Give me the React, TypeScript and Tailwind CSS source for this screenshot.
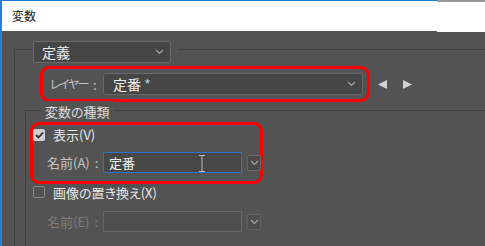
import React from "react";

const font = "font-['Noto_Sans_CJK_JP','Noto_Sans',sans-serif] [font-feature-settings:'palt']";

function Chevron({ className = "" }: { className?: string }) {
  return (
    <svg width="9" height="6" viewBox="0 0 9 6" className={className}>
      <path d="M1 1 L4.5 4.5 L8 1" fill="none" stroke="#a8a8a8" strokeWidth="1.1" />
    </svg>
  );
}

function SmallBtn({ disabled = false }: { disabled?: boolean }) {
  return (
    <div
      className={`w-[14px] h-[16px] flex items-center justify-center rounded-[2px] border ${
        disabled ? "border-[#626262] bg-[#4e4e4e]" : "border-[#676767] bg-[#4a4a4a]"
      }`}
    >
      <Chevron />
    </div>
  );
}

function Checkbox({ checked }: { checked: boolean }) {
  return checked ? (
    <div className="w-[12px] h-[12px] rounded-[2px] bg-[#cfcfcf] flex items-center justify-center">
      <svg width="9" height="8" viewBox="0 0 9 8">
        <path d="M1 4 L3.5 6.5 L8 1.5" fill="none" stroke="#2e2e2e" strokeWidth="1.8" />
      </svg>
    </div>
  ) : (
    <div className="w-[12px] h-[12px] rounded-[2px] border border-[#8a8a8a]" />
  );
}

function Label({ text, width, color, textClass = "" }: { text: string; width: string; color: string; textClass?: string }) {
  return (
    <span className={`${width} ${color} shrink-0 whitespace-nowrap text-[13px] leading-none flex items-center`}>
      <span className={textClass}>{text}</span>
      <span className="ml-[5px]">:</span>
    </span>
  );
}

export default function App() {
  return (
    <div className={`w-[485px] h-[246px] bg-[#535353] border-l-2 border-[#2a7fd6] overflow-hidden flex flex-col ${font}`}>
      {/* title bar */}
      <div className="flex h-[31px] shrink-0">
        <div className="w-[435px] border-t border-[#1e7ad4] bg-white flex items-center pl-[10px] text-[12px] text-[#1a1a1a]">
          変数
        </div>
        <div className="flex-1 border-t-2 border-[#9a9a9a] bg-white h-[32px]" />
      </div>

      {/* body */}
      <div className="flex-1 pl-[12px] pt-[18px] flex flex-col">
        <div className="flex-1 border-l border-t border-[#424242] flex flex-col">
          {/* legend dropdown */}
          <div className="-mt-[9px] ml-[17px] w-fit bg-[#535353] pr-[7px] pl-[1px]">
            <div className="w-[138px] h-[22px] rounded-[3px] border border-[#6b6b6b] bg-[#464646] flex items-center justify-between pl-[8px] pr-[6px]">
              <span className="text-[14px] text-[#f0f0f0] leading-none">定義</span>
              <Chevron />
            </div>
          </div>

          {/* layer row */}
          <div className="flex items-center mt-[3px] ml-[25px]">
            <div className="w-[330px] h-[36px] border-[3px] border-[#ff0000] rounded-[9px] flex items-center pl-[7px]">
              <Label text="レイヤー" width="w-[53px]" color="text-[#c4c4c4]" textClass="text-[12px] tracking-[-1.5px]" />
              <div className="w-[260px] shrink-0 h-[22px] rounded-[3px] border border-[#696969] bg-[#464646] flex items-center justify-between pl-[9px] pr-[6px]">
                <span className="text-[14px] text-[#f0f0f0] leading-none whitespace-nowrap">
                  定番 <span className="text-[#9fd4f0]">*</span>
                </span>
                <Chevron />
              </div>
            </div>
            <div className="flex items-center gap-[16px] ml-[8px]">
              <svg width="9" height="9" viewBox="0 0 9 9">
                <path d="M0 4.5 L9 0 L9 9 Z" fill="#d2d2d2" />
              </svg>
              <svg width="9" height="9" viewBox="0 0 9 9">
                <path d="M9 4.5 L0 0 L0 9 Z" fill="#d2d2d2" />
              </svg>
            </div>
          </div>

          {/* fieldset 2 */}
          <div className="flex-1 mt-[8px] ml-[10px] border-l border-t border-[#424242] flex flex-col">
            <div className="-mt-[10px] h-[20px] ml-[15px] w-fit bg-[#535353] px-[4px] flex items-center text-[13px] text-[#dcdcdc] leading-none">
              変数の種類
            </div>

            {/* red box 2 */}
            <div className="mt-[1px] ml-[4px] w-[233px] h-[62px] border-[3px] border-[#ff0000] rounded-[9px] flex flex-col">
              <div className="h-[17px] mt-[1px] flex items-center">
                <Checkbox checked />
                <span className="ml-[8px] text-[13px] text-[#e8e8e8] leading-none">表示(V)</span>
              </div>
              <div className="mt-[9px] flex items-center pl-[14px]">
                <Label text="名前(A)" width="w-[56px]" color="text-[#c4c4c4]" />
                <div className="relative w-[139px] shrink-0 h-[21px] border border-[#2b73d0] bg-[#474747] flex items-center pl-[5px]">
                  <span className="text-[13px] text-[#f2f2f2] leading-none">定番</span>
                  <svg className="absolute left-[94px] top-[2px]" width="8" height="17" viewBox="0 0 8 17">
                    <path d="M1 0.5 H7 M4 0.5 V16.5 M1 16.5 H7" stroke="#bdbdbd" strokeWidth="1" fill="none" />
                  </svg>
                </div>
                <div className="ml-[5px]">
                  <SmallBtn />
                </div>
              </div>
            </div>

            {/* checkbox 2 */}
            <div className="mt-[1px] ml-[7px] h-[14px] flex items-center">
              <Checkbox checked={false} />
              <span className="ml-[8px] text-[13px] text-[#e8e8e8] leading-none whitespace-nowrap">画像の置き換え(X)</span>
            </div>

            <div className="mt-[12px] ml-[21px] flex items-center">
              <Label text="名前(E)" width="w-[56px]" color="text-[#7c7c7c]" />
              <div className="w-[139px] shrink-0 h-[21px] border border-[#676767] bg-[#4f4f4f]" />
              <div className="ml-[5px]">
                <SmallBtn disabled />
              </div>
            </div>
          </div>
        </div>
      </div>
    </div>
  );
}
